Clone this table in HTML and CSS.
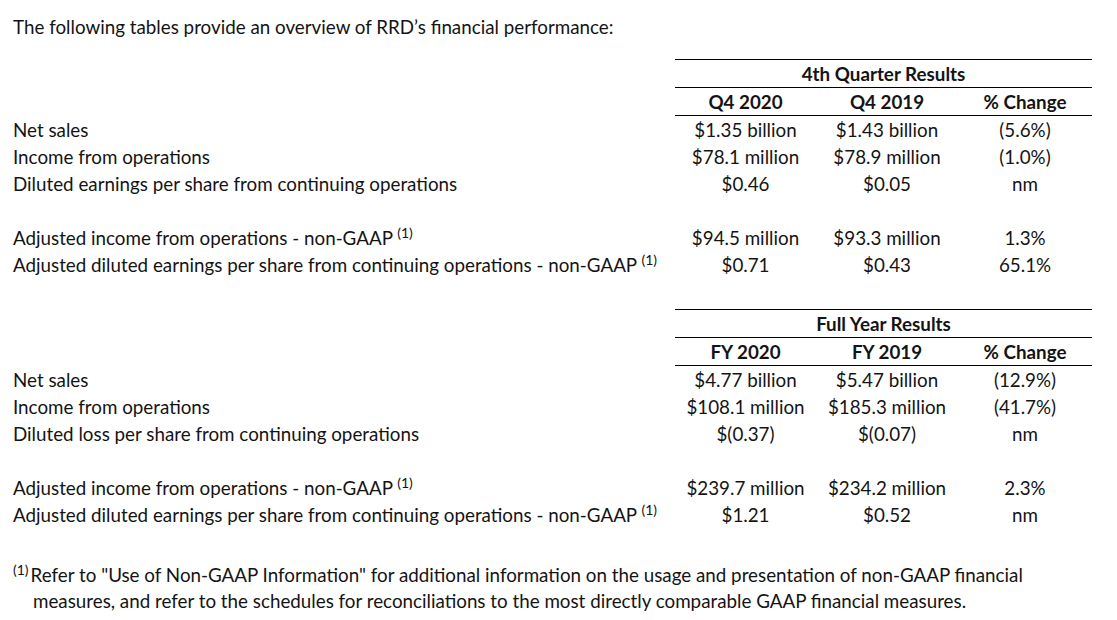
FILE: index.html
```html
<!DOCTYPE html>
<html lang="en">
<head>
<meta charset="utf-8">
<title>RRD financial performance</title>
<link rel="stylesheet" href="styles.css">
</head>
<body>
<div class="page">
  <p class="intro">The following tables provide an overview of RRD’s financial performance:</p>

  <table class="fin">
    <colgroup>
      <col class="c-label"><col class="c-a"><col class="c-b"><col class="c-c">
    </colgroup>
    <tr class="title-row"><td></td><th colspan="3" class="title">4th Quarter Results</th></tr>
    <tr class="head-row"><td></td><th>Q4 2020</th><th>Q4 2019</th><th>% Change</th></tr>
    <tr><td class="label">Net sales</td><td>$1.35 billion</td><td>$1.43 billion</td><td>(5.6%)</td></tr>
    <tr><td class="label">Income from operations</td><td>$78.1 million</td><td>$78.9 million</td><td>(1.0%)</td></tr>
    <tr><td class="label">Diluted earnings per share from continuing operations</td><td>$0.46</td><td>$0.05</td><td>nm</td></tr>
    <tr class="blank"><td></td><td></td><td></td><td></td></tr>
    <tr><td class="label">Adjusted income from operations - non-GAAP <span class="fn">(1)</span></td><td>$94.5 million</td><td>$93.3 million</td><td>1.3%</td></tr>
    <tr><td class="label">Adjusted diluted earnings per share from continuing operations - non-GAAP <span class="fn">(1)</span></td><td>$0.71</td><td>$0.43</td><td>65.1%</td></tr>
  </table>

  <table class="fin second">
    <colgroup>
      <col class="c-label"><col class="c-a"><col class="c-b"><col class="c-c">
    </colgroup>
    <tr class="title-row"><td></td><th colspan="3" class="title">Full Year Results</th></tr>
    <tr class="head-row"><td></td><th>FY 2020</th><th>FY 2019</th><th>% Change</th></tr>
    <tr><td class="label">Net sales</td><td>$4.77 billion</td><td>$5.47 billion</td><td>(12.9%)</td></tr>
    <tr><td class="label">Income from operations</td><td>$108.1 million</td><td>$185.3 million</td><td>(41.7%)</td></tr>
    <tr><td class="label">Diluted loss per share from continuing operations</td><td>$(0.37)</td><td>$(0.07)</td><td>nm</td></tr>
    <tr class="blank"><td></td><td></td><td></td><td></td></tr>
    <tr><td class="label">Adjusted income from operations - non-GAAP <span class="fn">(1)</span></td><td>$239.7 million</td><td>$234.2 million</td><td>2.3%</td></tr>
    <tr><td class="label">Adjusted diluted earnings per share from continuing operations - non-GAAP <span class="fn">(1)</span></td><td>$1.21</td><td>$0.52</td><td>nm</td></tr>
  </table>

  <p class="note"><span class="fn-note">(1)</span>Refer to "Use of Non-GAAP Information" for additional information on the usage and presentation of non-GAAP financial measures, and refer to the schedules for reconciliations to the most directly comparable GAAP financial measures.</p>
</div>
</body>
</html>
```

FILE: styles.css
```css
html, body {
  margin: 0;
  padding: 0;
  background: #ffffff;
}

body {
  font-family: "Lato", "Liberation Sans", sans-serif;
  font-size: 18.8px;
  color: #141414;
}

.page {
  padding: 13px 0 0 13px;
  width: 1080px;
}

.intro {
  margin: 0;
  line-height: 27px;
}

.fin {
  border-collapse: collapse;
  margin-top: 19px;
  table-layout: fixed;
  width: 1079px;
}

.fin.second {
  margin-top: 31px;
}

.c-label { width: 662px; }
.c-a { width: 141px; }
.c-b { width: 142px; }
.c-c { width: 134px; }

.fin td,
.fin th {
  padding: 0;
  height: 27px;
  line-height: 27px;
  text-align: center;
  white-space: nowrap;
  vertical-align: middle;
}

.fin th {
  font-weight: 700;
}

.fin td.label {
  text-align: left;
}

.title-row th {
  border-top: 1px solid #000;
  border-bottom: 1px solid #000;
}

.head-row th {
  border-bottom: 1px solid #000;
}

.fn {
  font-size: 14px;
  line-height: 1;
  vertical-align: 7px;
}

.note {
  margin: 34px 0 0 0;
  padding-left: 20px;
  text-indent: -20px;
  line-height: 26px;
  width: 1020px;
}

.fn-note {
  font-size: 14px;
  line-height: 1;
  vertical-align: 7px;
  margin-right: 2px;
}
```
